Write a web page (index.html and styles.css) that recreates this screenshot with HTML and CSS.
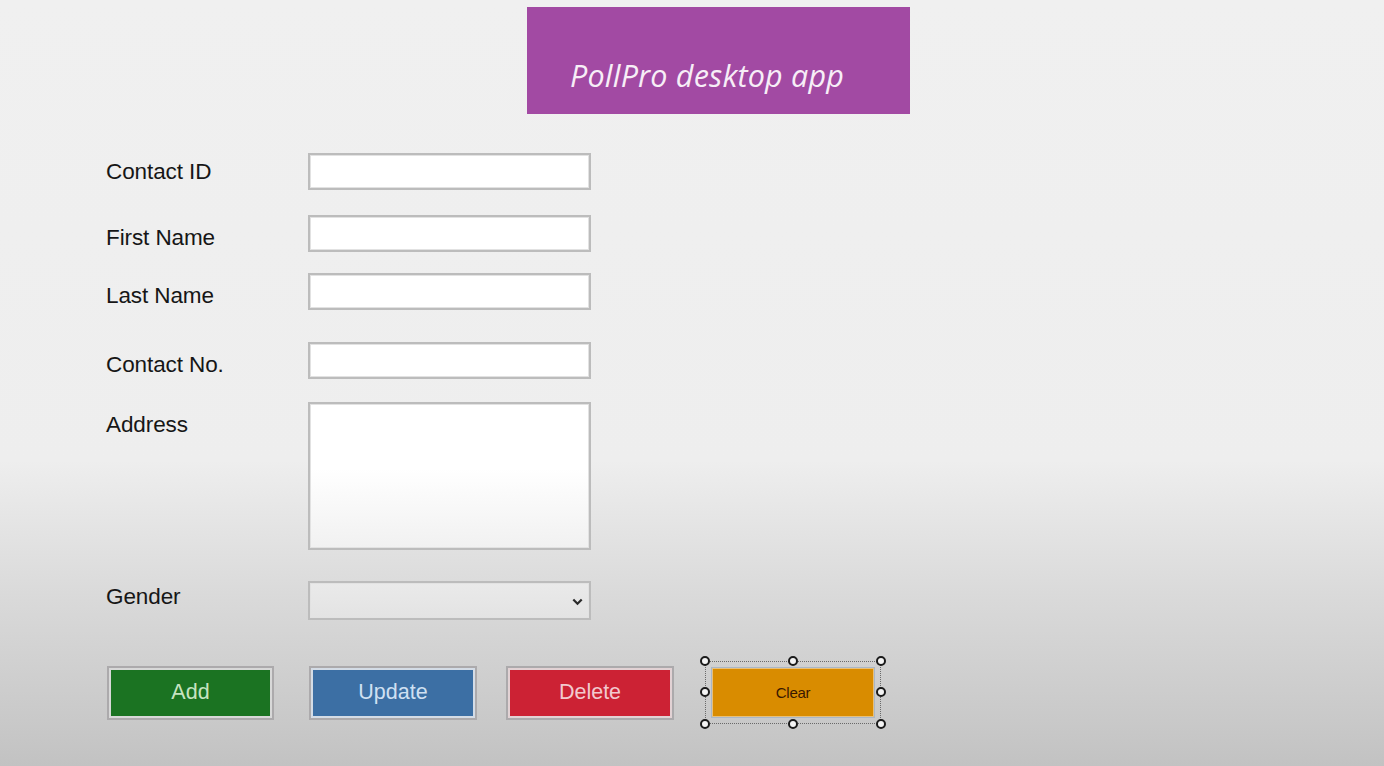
FILE: index.html
```html
<!DOCTYPE html>
<html lang="en">
<head>
<meta charset="utf-8">
<title>PollPro desktop app</title>
<link rel="stylesheet" href="styles.css">
</head>
<body>
<div class="page">
  <header class="header">
    <div class="banner"><span class="banner-text">PollPro desktop app</span></div>
  </header>
  <main class="form">
    <div class="row row-first">
      <label class="label label-tight">Contact ID</label>
      <div class="field"></div>
    </div>
    <div class="row row-first-name">
      <label class="label">First Name</label>
      <div class="field"></div>
    </div>
    <div class="row row-last-name">
      <label class="label">Last Name</label>
      <div class="field"></div>
    </div>
    <div class="row row-contact-no">
      <label class="label">Contact No.</label>
      <div class="field"></div>
    </div>
    <div class="row row-address">
      <label class="label">Address</label>
      <div class="field field-area"></div>
    </div>
    <div class="row row-gender">
      <label class="label label-gender">Gender</label>
      <div class="field field-select">
        <svg class="chevron" width="11" height="8" viewBox="0 0 11 8"><path d="M1.3 1.5 L5.5 5.7 L9.7 1.5" fill="none" stroke="#2a2a2a" stroke-width="2.2"/></svg>
      </div>
    </div>
    <div class="buttons">
      <div class="btn btn-add">Add</div>
      <div class="btn btn-update">Update</div>
      <div class="btn btn-delete">Delete</div>
      <div class="selection">
        <div class="btn-clear">Clear</div>
        <span class="handle h-tl"></span>
        <span class="handle h-tm"></span>
        <span class="handle h-tr"></span>
        <span class="handle h-ml"></span>
        <span class="handle h-mr"></span>
        <span class="handle h-bl"></span>
        <span class="handle h-bm"></span>
        <span class="handle h-br"></span>
      </div>
    </div>
  </main>
</div>
</body>
</html>
```

FILE: styles.css
```css
* { box-sizing: border-box; }

html, body {
  margin: 0;
  padding: 0;
  height: 100%;
}

body {
  width: 1384px;
  height: 766px;
  overflow: hidden;
  font-family: "Liberation Sans", Arial, sans-serif;
  background: linear-gradient(to bottom, #f0f0f0 0px, #eeeeee 460px, #d9d9d9 600px, #c9c9c9 720px, #c2c2c2 766px);
}

.page {
  display: flex;
  flex-direction: column;
}

.header {
  display: flex;
  padding-left: 527px;
  padding-top: 7px;
}

.banner {
  width: 383px;
  height: 107px;
  background: #a24aa3;
  display: flex;
  align-items: flex-end;
  padding-left: 43px;
  padding-bottom: 20px;
}

.banner-text {
  font-family: "Open Sans", "Noto Sans", sans-serif;
  font-style: italic;
  font-size: 30.5px;
  line-height: 38px;
  color: #f7eef7;
  letter-spacing: 0.2px;
}

.form {
  display: flex;
  flex-direction: column;
  padding-left: 106px;
  padding-top: 39px;
}

.row {
  display: flex;
  align-items: flex-start;
}

.row-first-name { margin-top: 25px; }
.row-last-name { margin-top: 21px; }
.row-contact-no { margin-top: 32px; }
.row-address { margin-top: 23px; }
.row-gender { margin-top: 31px; }

.label {
  width: 202px;
  font-size: 22.5px;
  line-height: 26px;
  color: #161616;
  margin-top: 10px;
  letter-spacing: -0.1px;
}

.label-tight { margin-top: 6px; }
.label-gender { margin-top: 3px; }

.field {
  width: 283px;
  height: 37px;
  background: #ffffff;
  border: 2px solid #bcbcbc;
  box-shadow: inset 0 0 0 1px #e2e2e2;
}

.field-area {
  height: 148px;
  background: linear-gradient(to bottom, #ffffff 0%, #ffffff 45%, #f1f1f1 100%);
}

.field-select {
  height: 39px;
  background: linear-gradient(to bottom, #eaeaea, #e3e3e3);
  display: flex;
  align-items: center;
  justify-content: flex-end;
  padding-right: 6px;
}

.chevron { display: block; margin-top: 3px; }

.buttons {
  display: flex;
  align-items: center;
  margin-top: 41px;
  margin-left: 1px;
}

.btn {
  width: 167px;
  height: 54px;
  border: 2px solid #acaaac;
  box-shadow: inset 0 0 0 2px #d8d8d8;
  display: flex;
  align-items: center;
  justify-content: center;
  font-size: 21.5px;
}

.btn-add {
  background: #1b7322;
  color: #c6e4c0;
}

.btn-update {
  margin-left: 35px;
  width: 168px;
  background: #3c6fa4;
  color: #cfe0f2;
  box-shadow: inset 0 0 0 2px #d4dce6;
}

.btn-delete {
  margin-left: 29px;
  width: 168px;
  background: #cc2234;
  color: #f2c9ce;
  box-shadow: inset 0 0 0 2px #e2d2d4;
}

.selection {
  position: relative;
  margin-left: 31px;
  width: 176px;
  height: 63px;
  border: 1px dotted #6a6a6a;
  padding: 5px;
  display: flex;
}

.btn-clear {
  flex: 1;
  background: #d98c00;
  border: 1px solid #a9b6c6;
  box-shadow: inset 0 0 0 1px #e8c07a;
  display: flex;
  align-items: center;
  justify-content: center;
  color: #3a1800;
  font-size: 15px;
  letter-spacing: -0.3px;
}

.handle {
  position: absolute;
  width: 10px;
  height: 10px;
  border: 2px solid #1a1a1a;
  border-radius: 50%;
  background: #f4f4f4;
}

.h-tl { left: -6px; top: -6px; }
.h-tm { left: 82px; top: -6px; }
.h-tr { right: -6px; top: -6px; }
.h-ml { left: -6px; top: 25px; }
.h-mr { right: -6px; top: 25px; }
.h-bl { left: -6px; bottom: -6px; }
.h-bm { left: 82px; bottom: -6px; }
.h-br { right: -6px; bottom: -6px; }
```
